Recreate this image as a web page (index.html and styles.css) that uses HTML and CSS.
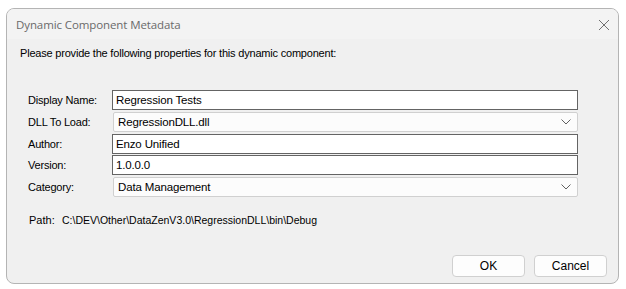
FILE: index.html
```html
<!DOCTYPE html>
<html>
<head>
<meta charset="utf-8">
<link rel="stylesheet" href="styles.css">
</head>
<body>
<div class="window">
  <div class="titlebar">
    <span class="title">Dynamic Component Metadata</span>
    <svg class="close" width="12" height="12" viewBox="0 0 12 12"><path d="M1 1 L11 11 M11 1 L1 11" stroke="#707070" stroke-width="1"/></svg>
  </div>
  <div class="content">
    <div class="intro">Please provide the following properties for this dynamic component:</div>
    <div class="form">
      <div class="row"><label class="lbl">Display Name:</label><div class="field text">Regression Tests</div></div>
      <div class="row"><label class="lbl">DLL To Load:</label><div class="field combo"><span>RegressionDLL.dll</span><svg class="chev" width="10" height="6" viewBox="0 0 10 6"><path d="M0.5 0.5 L5 5 L9.5 0.5" fill="none" stroke="#606060" stroke-width="1"/></svg></div></div>
      <div class="row"><label class="lbl">Author:</label><div class="field text">Enzo Unified</div></div>
      <div class="row"><label class="lbl">Version:</label><div class="field text">1.0.0.0</div></div>
      <div class="row"><label class="lbl">Category:</label><div class="field combo"><span>Data Management</span><svg class="chev" width="10" height="6" viewBox="0 0 10 6"><path d="M0.5 0.5 L5 5 L9.5 0.5" fill="none" stroke="#606060" stroke-width="1"/></svg></div></div>
    </div>
    <div class="path"><span class="plabel">Path:</span><span class="pval">C:\DEV\Other\DataZenV3.0\RegressionDLL\bin\Debug</span></div>
    <div class="buttons">
      <button class="btn">OK</button>
      <button class="btn">Cancel</button>
    </div>
  </div>
</div>
</body>
</html>
```
FILE: styles.css
```css
* { box-sizing: border-box; }
html, body { margin: 0; padding: 0; background: #ffffff; }
body { font-family: "Liberation Sans", Arial, sans-serif; font-size: 11px; color: #000; letter-spacing: -0.2px; }
.window {
  margin: 8px 0 0 6px;
  width: 613px;
  height: 276px;
  border: 1px solid #b4b4b4;
  border-radius: 8px;
  background: #f0f0f0;
  overflow: hidden;
  display: flex;
  flex-direction: column;
}
.titlebar {
  height: 30px;
  flex: none;
  background: #f3f3f3;
  display: flex;
  align-items: center;
  justify-content: space-between;
  padding: 0 8px 0 9px;
}
.title { font-family: "Open Sans", sans-serif; font-size: 11.5px; color: #6a6a6a; letter-spacing: -0.1px; }
.close { margin-top: 1px; }
.content { flex: 1; display: flex; flex-direction: column; padding: 0 0 0 13px; }
.intro { margin-top: 8px; height: 13px; line-height: 13px; }
.form { margin-top: 30px; display: flex; flex-direction: column; gap: 1px; }
.row { display: flex; align-items: center; height: 20px; }
.lbl { width: 92px; padding-left: 8px; color: #000; }
.field { width: 466px; height: 20px; display: flex; align-items: center; font-size: 11.5px; letter-spacing: -0.15px; }
.text { background: #fff; border: 1px solid #646464; padding-left: 3px; }
.combo { background: #fcfcfc; border: 1px solid #d0d0d0; border-radius: 2px; padding-left: 4px; justify-content: space-between; padding-right: 6px; margin-left: 1px; width: 465px; }
.row:nth-child(2) { margin-top: 1px; }
.row:nth-child(3) { margin-top: 1px; }
.row:nth-child(5) { margin-top: 1px; }
.path { margin-top: 17px; display: flex; align-items: baseline; padding-left: 9px; letter-spacing: 0; }
.plabel { width: 33px; }
.pval { font-size: 10.5px; }
.buttons { margin-top: auto; margin-bottom: 6px; display: flex; justify-content: flex-end; gap: 9px; padding-right: 11px; }
.btn {
  width: 73px; height: 22px;
  font-family: "Liberation Sans", Arial, sans-serif; font-size: 12px;
  background: #fdfdfd; border: 1px solid #d0d0d0; border-radius: 4px; color: #000;
  padding: 0;
}
```
